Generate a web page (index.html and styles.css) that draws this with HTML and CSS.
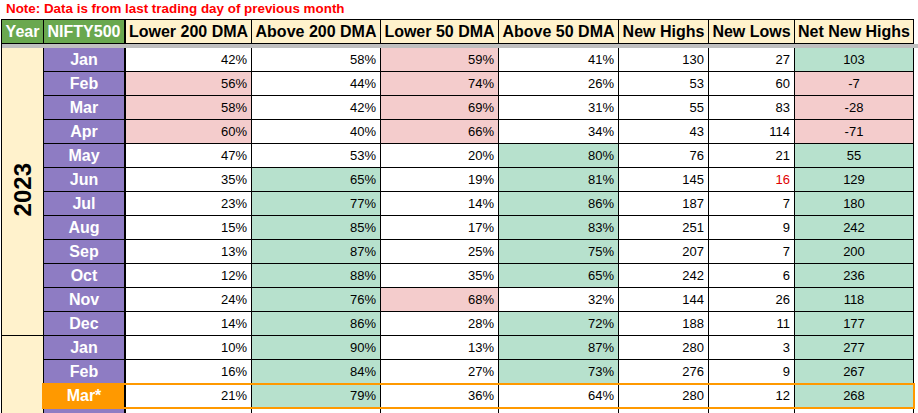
FILE: index.html
```html
<!DOCTYPE html>
<html>
<head>
<meta charset="utf-8">
<link rel="stylesheet" href="styles.css">
</head>
<body>
<div class="note">Note: Data is from last trading day of previous month</div>
<div class="wrap">
<table class="grid">
<thead>
<tr class="head">
<th class="h-green c-year">Year</th>
<th class="h-green c-month">NIFTY500</th>
<th class="c-l200">Lower 200 DMA</th>
<th class="c-a200">Above 200 DMA</th>
<th class="c-l50">Lower 50 DMA</th>
<th class="c-a50">Above 50 DMA</th>
<th class="c-nh">New Highs</th>
<th class="c-nl">New Lows</th>
<th class="c-nnh">Net New Highs</th>
</tr>
<tr class="sep"><td colspan="9"></td></tr>
</thead>
<tbody>
<tr><td class="year" rowspan="12"><span class="ylabel">2023</span></td><td class="month">Jan</td><td>42%</td><td>58%</td><td class="pink">59%</td><td>41%</td><td>130</td><td>27</td><td class="net green">103</td></tr>
<tr><td class="month">Feb</td><td class="pink">56%</td><td>44%</td><td class="pink">74%</td><td>26%</td><td>53</td><td>60</td><td class="net pink">-7</td></tr>
<tr><td class="month">Mar</td><td class="pink">58%</td><td>42%</td><td class="pink">69%</td><td>31%</td><td>55</td><td>83</td><td class="net pink">-28</td></tr>
<tr><td class="month">Apr</td><td class="pink">60%</td><td>40%</td><td class="pink">66%</td><td>34%</td><td>43</td><td>114</td><td class="net pink">-71</td></tr>
<tr><td class="month">May</td><td>47%</td><td>53%</td><td>20%</td><td class="green">80%</td><td>76</td><td>21</td><td class="net green">55</td></tr>
<tr><td class="month">Jun</td><td>35%</td><td class="green">65%</td><td>19%</td><td class="green">81%</td><td>145</td><td class="red">16</td><td class="net green">129</td></tr>
<tr><td class="month">Jul</td><td>23%</td><td class="green">77%</td><td>14%</td><td class="green">86%</td><td>187</td><td>7</td><td class="net green">180</td></tr>
<tr><td class="month">Aug</td><td>15%</td><td class="green">85%</td><td>17%</td><td class="green">83%</td><td>251</td><td>9</td><td class="net green">242</td></tr>
<tr><td class="month">Sep</td><td>13%</td><td class="green">87%</td><td>25%</td><td class="green">75%</td><td>207</td><td>7</td><td class="net green">200</td></tr>
<tr><td class="month">Oct</td><td>12%</td><td class="green">88%</td><td>35%</td><td class="green">65%</td><td>242</td><td>6</td><td class="net green">236</td></tr>
<tr><td class="month">Nov</td><td>24%</td><td class="green">76%</td><td class="pink">68%</td><td>32%</td><td>144</td><td>26</td><td class="net green">118</td></tr>
<tr><td class="month">Dec</td><td>14%</td><td class="green">86%</td><td>28%</td><td class="green">72%</td><td>188</td><td>11</td><td class="net green">177</td></tr>
<tr><td class="year" rowspan="4"></td><td class="month">Jan</td><td>10%</td><td class="green">90%</td><td>13%</td><td class="green">87%</td><td>280</td><td>3</td><td class="net green">277</td></tr>
<tr><td class="month">Feb</td><td>16%</td><td class="green">84%</td><td>27%</td><td class="green">73%</td><td>276</td><td>9</td><td class="net green">267</td></tr>
<tr class="hl"><td class="month current">Mar*</td><td>21%</td><td class="green">79%</td><td>36%</td><td>64%</td><td>280</td><td>12</td><td class="net green">268</td></tr>
<tr><td class="month"></td><td></td><td></td><td></td><td></td><td></td><td></td><td></td></tr>
</tbody>
</table>
</div>
</body>
</html>
```

FILE: styles.css
```css
html, body {
  margin: 0;
  padding: 0;
  background: #ffffff;
  overflow: hidden;
}

body {
  font-family: "Liberation Sans", Arial, sans-serif;
  color: #000000;
}

.note {
  height: 19px;
  line-height: 18px;
  padding-left: 6px;
  font-size: 13.4px;
  font-weight: bold;
  color: #ff0000;
}

.wrap {
  padding-left: 1px;
}

.grid {
  border-collapse: separate;
  border-spacing: 0;
  table-layout: fixed;
  width: 913px;
  border-top: 1px solid #000;
  border-left: 1px solid #000;
}

.grid th,
.grid td {
  box-sizing: border-box;
  border-right: 1px solid #000;
  border-bottom: 1px solid #000;
  padding: 0 4px;
  white-space: nowrap;
  overflow: visible;
}

.grid tr {
  height: 24px;
}

.head th {
  background: #fff2cc;
  font-size: 16px;
  font-weight: bold;
  text-align: center;
  padding: 0 2px;
  line-height: 22px;
}

.head th.h-green {
  background: #6aa84f;
  color: #ffffff;
}

.c-year { width: 42px; }
.c-month { width: 82px; border-right-width: 2px !important; }
.c-l200 { width: 126px; }
.c-a200 { width: 129px; }
.c-l50 { width: 118px; }
.c-a50 { width: 120px; }
.c-nh { width: 90px; }
.c-nl { width: 86px; }
.c-nnh { width: 119px; }

.grid tr.sep {
  height: 4px;
}

.sep td {
  height: 4px;
  padding: 0;
  border: none;
  background: #bfbfbf;
  box-shadow: 5px 0 0 #bfbfbf;
}

.grid td {
  font-size: 13px;
  text-align: right;
  line-height: 16px;
  vertical-align: middle;
}

.grid td.year {
  background: #fff2cc;
  text-align: center;
  padding: 0;
}

.ylabel {
  display: inline-block;
  writing-mode: vertical-rl;
  transform: rotate(180deg);
  font-size: 24px;
  font-weight: bold;
  line-height: 24px;
}

.grid td.month {
  background: #8e7cc3;
  color: #ffffff;
  font-size: 16px;
  font-weight: bold;
  text-align: center;
  border-right-width: 2px;
}

.grid td.month.current {
  background: #ff9900;
}

.grid td.net {
  text-align: center;
}

.pink { background: #f4cccc; }
.green { background: #b7e1cd; }
.red { color: #e00000; }

.hl td {
  position: relative;
}

.hl td::after {
  content: "";
  position: absolute;
  left: -1px;
  right: -1px;
  top: -1px;
  bottom: -2px;
  border-top: 2px solid #ff9900;
  border-bottom: 2px solid #ff9900;
  pointer-events: none;
}

.hl td:first-child::after {
  left: -2px;
  border-left: 2px solid #ff9900;
}

.hl td:last-child::after {
  right: -2px;
  border-right: 2px solid #ff9900;
}
```
